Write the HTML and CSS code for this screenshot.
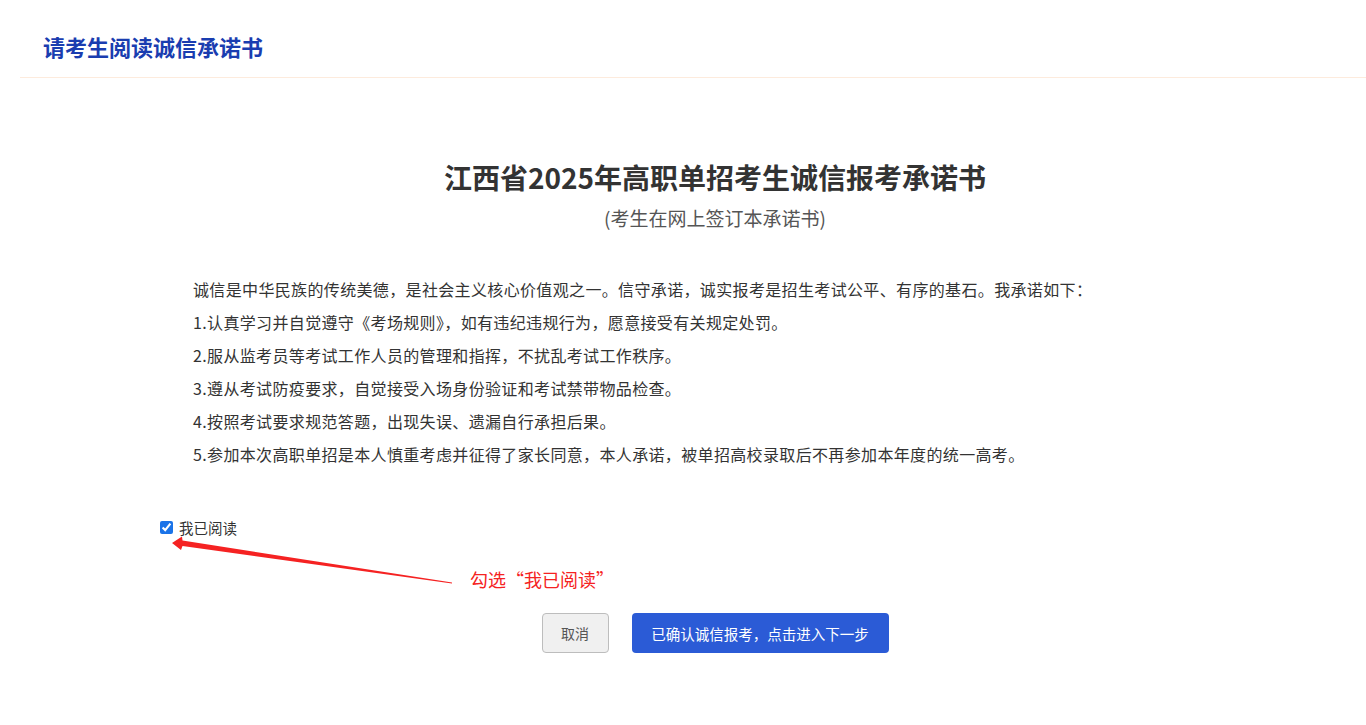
FILE: index.html
```html
<!DOCTYPE html>
<html lang="zh-CN">
<head>
    <meta charset="UTF-8">
    <meta name="viewport" content="width=device-width, initial-scale=1.0">
    <title>请考生阅读诚信承诺书</title>
    <link rel="stylesheet" href="styles.css">
</head>
<body>
    <header class="top-bar">
        <h1>请考生阅读诚信承诺书</h1>
    </header>

    <main class="page">
        <h2 class="pledge-title">江西省2025年高职单招考生诚信报考承诺书</h2>
        <p class="pledge-sub">(考生在网上签订本承诺书)</p>

        <div class="pledge-text">
            <p>诚信是中华民族的传统美德，是社会主义核心价值观之一。信守承诺，诚实报考是招生考试公平、有序的基石。我承诺如下：</p>
            <p>1.认真学习并自觉遵守《考场规则》，如有违纪违规行为，愿意接受有关规定处罚。</p>
            <p>2.服从监考员等考试工作人员的管理和指挥，不扰乱考试工作秩序。</p>
            <p>3.遵从考试防疫要求，自觉接受入场身份验证和考试禁带物品检查。</p>
            <p>4.按照考试要求规范答题，出现失误、遗漏自行承担后果。</p>
            <p>5.参加本次高职单招是本人慎重考虑并征得了家长同意，本人承诺，被单招高校录取后不再参加本年度的统一高考。</p>
        </div>

        <label class="read-check">
            <input type="checkbox" checked>
            <span>我已阅读</span>
        </label>

        <div class="hint">勾选“我已阅读”</div>

        <div class="actions">
            <button type="button" class="btn btn-cancel">取消</button>
            <button type="button" class="btn btn-next">已确认诚信报考，点击进入下一步</button>
        </div>
    </main>

    <!-- 标注箭头 -->
    <svg class="arrow" width="1366" height="725" viewBox="0 0 1366 725">
        <polygon points="172,543 182,536.5 182.5,540.5 452,582.6 452,583.6 182.5,546 181,550" fill="#f52222"/>
    </svg>
</body>
</html>
```

FILE: styles.css
```css
* {
    margin: 0;
    padding: 0;
    box-sizing: border-box;
}

body {
    font-family: "Noto Sans CJK SC", "Noto Sans", sans-serif;
    background: #fff;
    color: #333;
    position: relative;
    width: 1366px;
    height: 725px;
    overflow: hidden;
}

.top-bar {
    margin-left: 20px;
    padding: 31px 0 16px 23px;
    border-bottom: 1px solid #fdebdd;
}

.top-bar h1 {
    font-size: 22px;
    line-height: 30px;
    font-weight: bold;
    color: #1a3db0;
}

.page {
    margin-left: 160px;
    width: 1110px;
}

.pledge-title {
    margin-top: 79px;
    text-align: center;
    font-size: 28px;
    line-height: 40px;
    font-weight: bold;
    color: #333;
}

.pledge-sub {
    margin-top: 7px;
    text-align: center;
    font-size: 19px;
    line-height: 28px;
    color: #555;
}

.pledge-text {
    margin-top: 41px;
    padding-left: 33px;
    font-size: 16px;
    letter-spacing: 0.35px;
    line-height: 33px;
    color: #333;
}

.read-check {
    margin-top: 46px;
    display: flex;
    align-items: center;
    gap: 6px;
    height: 20px;
    font-size: 14.5px;
    color: #333;
}

.read-check input {
    margin: 0;
    width: 13px;
    height: 13px;
    accent-color: #1a73e8;
}

.hint {
    margin-top: 30px;
    margin-left: 310px;
    font-size: 18px;
    line-height: 24px;
    color: #f52222;
}

.actions {
    margin-top: 22px;
    display: flex;
    justify-content: center;
    gap: 23px;
}

.btn {
    height: 40px;
    border-radius: 4px;
    font-family: inherit;
    font-size: 14px;
    cursor: pointer;
}

.btn-cancel {
    width: 67px;
    background: #f0f0f0;
    border: 1px solid #bdbdbd;
    color: #555;
}

.btn-next {
    width: 257px;
    background: #2b5bd6;
    border: none;
    color: #fff;
    font-size: 14.5px;
}

.arrow {
    position: absolute;
    top: 0;
    left: 0;
    pointer-events: none;
}
```
